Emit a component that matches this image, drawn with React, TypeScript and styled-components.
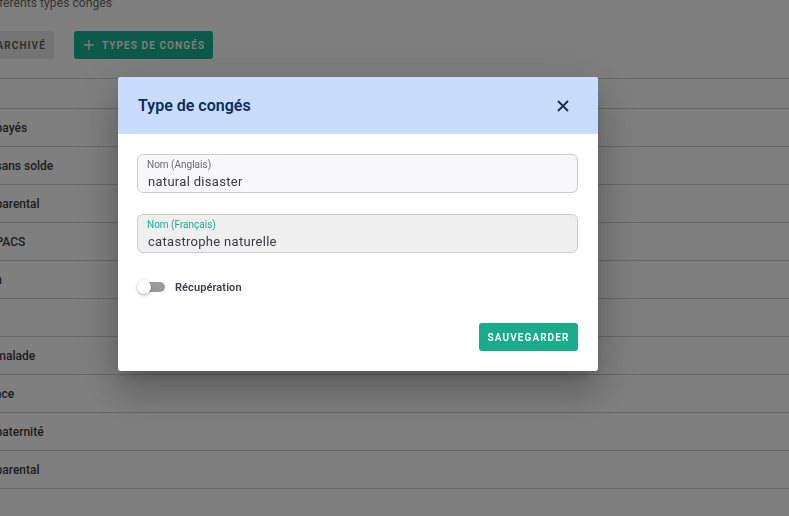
import React, { useState } from "react";
import styled, { createGlobalStyle } from "styled-components";

const GlobalStyle = createGlobalStyle`
  html, body {
    margin: 0;
    padding: 0;
    background: #ffffff;
    font-family: Roboto, "Liberation Sans", Arial, sans-serif;
    overflow: hidden;
  }
`;

const green = "#1aab8a";
const navy = "#0d2b5e";

// page behind the dialog (scrolled, so it is cut on the left and top)
const Page = styled.div`
  width: 900px;
  margin-left: -72px;
  margin-top: -7px;
`;

const Subtitle = styled.p`
  margin: 0 0 0 5px;
  height: 20px;
  line-height: 20px;
  font-size: 12.2px;
  color: #6b6b6b;
`;

const Toolbar = styled.div`
  display: flex;
  gap: 20px;
  margin-top: 18px;
  margin-left: 28px;
  height: 28px;
`;

const ToolButton = styled.button<{ $primary?: boolean }>`
  display: flex;
  align-items: center;
  gap: 8px;
  height: 28px;
  padding: 0 8px 0 10px;
  border: none;
  border-radius: 3px;
  font-family: inherit;
  font-size: 10px;
  font-weight: 600;
  letter-spacing: 1.1px;
  background: ${(p) => (p.$primary ? "#1cb592" : "#e9e9e9")};
  color: ${(p) => (p.$primary ? "#ffffff" : "#5a5a5a")};
`;

const Table = styled.div`
  margin-top: 19px;
  border-top: 1px solid #d2d2d2;
`;

const Row = styled.div<{ $head?: boolean }>`
  height: ${(p) => (p.$head ? 29 : 37)}px;
  border-bottom: 1px solid #d2d2d2;
  display: flex;
  align-items: center;
  padding-left: 30px;
  font-size: 12px;
  font-weight: 500;
  color: #3c3c3c;
`;

// dialog
const Overlay = styled.div`
  position: fixed;
  inset: 0;
  background: rgba(0, 0, 0, 0.5);
  padding: 77px 0 0 118px;
`;

const Dialog = styled.div`
  width: 480px;
  background: #ffffff;
  border-radius: 3px;
  overflow: hidden;
  box-shadow: 0 11px 15px -7px rgba(0, 0, 0, 0.2),
    0 24px 38px 3px rgba(0, 0, 0, 0.14), 0 9px 46px 8px rgba(0, 0, 0, 0.12);
`;

const Header = styled.div`
  height: 57px;
  background: #c8dcfe;
  display: flex;
  align-items: center;
  justify-content: space-between;
  padding: 0 24px 0 20px;
`;

const Title = styled.h2`
  margin: 0;
  font-size: 16px;
  font-weight: 600;
  color: ${navy};
`;

const CloseButton = styled.button`
  width: 24px;
  height: 24px;
  padding: 0;
  border: none;
  background: transparent;
  display: flex;
  align-items: center;
  justify-content: center;
  margin-right: -1px;
  margin-top: 1px;
`;

const Body = styled.div`
  padding: 20px 20px 20px 19px;
  display: flex;
  flex-direction: column;
`;

const Field = styled.label<{ $filled?: boolean }>`
  display: flex;
  flex-direction: column;
  height: 39px;
  box-sizing: border-box;
  border: 1px solid #cbcbd0;
  border-radius: 6px;
  background: ${(p) => (p.$filled ? "#efefef" : "#f8f8fa")};
  padding: 4px 10px 0 9px;
  & + & {
    margin-top: 21px;
  }
`;

const FieldLabel = styled.span<{ $active?: boolean }>`
  font-size: 10px;
  line-height: 12px;
  color: ${(p) => (p.$active ? green : "#6a6a72")};
`;

const FieldValue = styled.span`
  font-size: 13px;
  line-height: 22px;
  margin-left: 1px;
  letter-spacing: 0.3px;
  color: #3a3a40;
`;

const SwitchRow = styled.div`
  display: flex;
  align-items: center;
  gap: 10px;
  margin-top: 26px;
  height: 16px;
`;

const Track = styled.span`
  position: relative;
  width: 28px;
  height: 16px;
  display: inline-block;
`;

const TrackBar = styled.span`
  position: absolute;
  left: 3px;
  right: 0;
  top: 3px;
  height: 10px;
  border-radius: 5px;
  background: #9b9b9b;
`;

const Thumb = styled.span<{ $on: boolean }>`
  position: absolute;
  top: 1px;
  left: ${(p) => (p.$on ? 14 : 0)}px;
  width: 14px;
  height: 14px;
  border-radius: 50%;
  background: #ffffff;
  box-shadow: 0 1px 3px rgba(0, 0, 0, 0.35);
`;

const SwitchLabel = styled.span`
  font-size: 11px;
  font-weight: 600;
  letter-spacing: 0.1px;
  color: #3d3d48;
`;

const Footer = styled.div`
  display: flex;
  justify-content: flex-end;
  margin-top: 28px;
`;

const SaveButton = styled.button`
  height: 28px;
  width: 99px;
  border: none;
  border-radius: 3px;
  background: ${green};
  color: #ffffff;
  font-family: inherit;
  font-size: 10px;
  font-weight: 600;
  letter-spacing: 1.1px;
`;

const rows = [
  "Congé payés",
  "Congé sans solde",
  "Congé parental",
  "Congé PACS",
  "Réunion",
  "",
  "Congé malade",
  "Naissance",
  "Congé paternité",
  "Congé parental",
  "",
];

export default function App() {
  const [recup, setRecup] = useState(false);
  return (
    <>
      <GlobalStyle />
      <Page>
        <Subtitle>Liste des différents types congés"</Subtitle>
        <Toolbar>
          <ToolButton>VOIR ARCHIVÉ</ToolButton>
          <ToolButton $primary>
            <svg width="10" height="10" viewBox="0 0 10 10">
              <path d="M5 0v10M0 5h10" stroke="#ffffff" strokeWidth="1.3" />
            </svg>
            TYPES DE CONGÉS
          </ToolButton>
        </Toolbar>
        <Table>
          <Row $head />
          {rows.map((r, i) => (
            <Row key={i}>{r}</Row>
          ))}
        </Table>
      </Page>
      <Overlay>
        <Dialog>
          <Header>
            <Title>Type de congés</Title>
            <CloseButton aria-label="Fermer">
              <svg width="12" height="12" viewBox="0 0 12 12">
                <path d="M1 1l10 10M11 1L1 11" stroke={navy} strokeWidth="1.8" />
              </svg>
            </CloseButton>
          </Header>
          <Body>
            <Field>
              <FieldLabel>Nom (Anglais)</FieldLabel>
              <FieldValue>natural disaster</FieldValue>
            </Field>
            <Field $filled>
              <FieldLabel $active>Nom (Français)</FieldLabel>
              <FieldValue>catastrophe naturelle</FieldValue>
            </Field>
            <SwitchRow onClick={() => setRecup(!recup)}>
              <Track>
                <TrackBar />
                <Thumb $on={recup} />
              </Track>
              <SwitchLabel>Récupération</SwitchLabel>
            </SwitchRow>
            <Footer>
              <SaveButton>SAUVEGARDER</SaveButton>
            </Footer>
          </Body>
        </Dialog>
      </Overlay>
    </>
  );
}
